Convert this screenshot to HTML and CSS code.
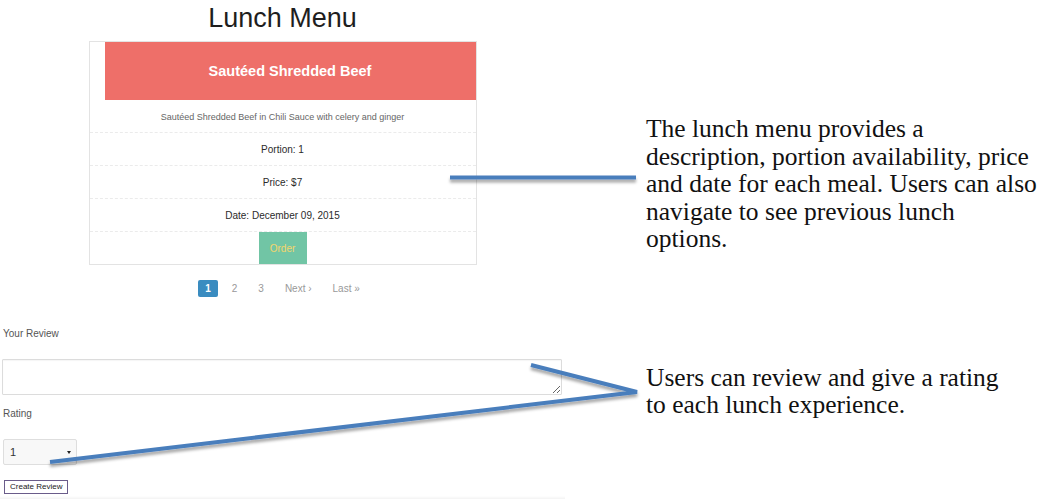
FILE: index.html
```html
<!DOCTYPE html>
<html lang="en">
<head>
<meta charset="utf-8">
<title>Lunch Menu</title>
<link rel="stylesheet" href="styles.css">
</head>
<body>
<div class="page">
  <main class="app">
    <section class="menu">
      <h1 class="title">Lunch Menu</h1>
      <div class="card">
        <div class="card-head">Sautéed Shredded Beef</div>
        <div class="row row-desc">Sautéed Shredded Beef in Chili Sauce with celery and ginger</div>
        <div class="row">Portion: 1</div>
        <div class="row">Price: $7</div>
        <div class="row">Date: December 09, 2015</div>
        <div class="row row-last"><button class="order" type="button">Order</button></div>
      </div>
      <nav class="pager">
        <span class="page-item active">1</span>
        <span class="page-item">2</span>
        <span class="page-item">3</span>
        <span class="page-item">Next ›</span>
        <span class="page-item">Last »</span>
      </nav>
    </section>
    <form class="review">
      <label class="label label-review">Your Review</label>
      <textarea class="review-text"></textarea>
      <label class="label label-rating">Rating</label>
      <div class="select-wrap">
        <select class="rating"><option>1</option><option>2</option><option>3</option><option>4</option><option>5</option></select>
        <span class="caret"></span>
      </div>
      <button class="submit" type="button">Create Review</button>
    </form>
    <div class="bottom-band"></div>
  </main>
  <aside class="notes">
    <p class="note note-menu">The lunch menu provides a<br>description, portion availability, price<br>and date for each meal. Users can also<br>navigate to see previous lunch<br>options.</p>
    <p class="note note-review">Users can review and give a rating<br>to each lunch experience.</p>
  </aside>
  <svg class="callouts" width="1044" height="499" viewBox="0 0 1044 499" aria-hidden="true">
    <defs>
      <filter id="sh" x="-10%" y="-50%" width="120%" height="300%">
        <feDropShadow dx="0" dy="3" stdDeviation="1.6" flood-color="#000" flood-opacity="0.35"/>
      </filter>
    </defs>
    <g stroke="#4a7ebc" stroke-width="4" fill="none" filter="url(#sh)">
      <line x1="450" y1="177.5" x2="636" y2="177.5"/>
      <polyline points="531,365 637,392 50,462" stroke-linejoin="miter"/>
    </g>
  </svg>
</div>
</body>
</html>
```

FILE: styles.css
```css
* { box-sizing: border-box; }
html, body { margin: 0; padding: 0; background: #fff; }
body {
  font-family: "Liberation Sans", Arial, Helvetica, sans-serif;
  color: #333;
  width: 1044px;
  height: 499px;
  overflow: hidden;
}
.page {
  position: relative;
  display: flex;
  width: 1044px;
  height: 499px;
}
.app {
  width: 565px;
  flex: none;
  display: flex;
  flex-direction: column;
}
.menu {
  width: 388px;
  margin: 0 auto;
  display: flex;
  flex-direction: column;
}
.title {
  margin: 0;
  padding-top: 2px;
  font-size: 27px;
  line-height: 32px;
  font-weight: normal;
  text-align: center;
  color: #1e1e1e;
}
.card {
  margin-top: 7px;
  border: 1px solid #e3e3e3;
  display: flex;
  flex-direction: column;
}
.card-head {
  margin-left: 15px;
  height: 58px;
  background: #ee6f69;
  color: #fff;
  font-weight: bold;
  font-size: 14.5px;
  display: flex;
  align-items: center;
  justify-content: center;
}
.row {
  height: 33px;
  padding-top: 1px;
  line-height: 32px;
  border-bottom: 1px dashed #ebebeb;
  text-align: center;
  font-size: 10px;
  color: #2b2b2b;
  overflow: hidden;
}
.row-desc { font-size: 9px; color: #666; }
.row-last { border-bottom: none; height: 32px; padding-top: 0; display: flex; justify-content: center; }
.order {
  width: 48px;
  height: 32px;
  border: none;
  margin: 0;
  padding: 0;
  background: #71c5a5;
  color: #f3d56c;
  font-family: inherit;
  font-size: 10px;
}
.pager {
  margin-top: 15px;
  display: flex;
  justify-content: center;
  gap: 7px;
}
.page-item {
  height: 17px;
  line-height: 17px;
  padding: 0 7px;
  font-size: 10px;
  color: #999;
  border-radius: 2px;
}
.page-item.active {
  background: #3a8cc0;
  color: #fff;
  font-weight: bold;
}
.review {
  display: flex;
  flex-direction: column;
  align-items: flex-start;
  padding-left: 2px;
}
.label {
  font-size: 10px;
  line-height: 12px;
  color: #555;
  padding-left: 1px;
}
.label-review { margin-top: 31px; }
.review-text {
  margin-top: 19px;
  width: 560px;
  height: 36px;
  border: 1px solid #dcdcdc;
  border-radius: 1px;
  padding: 4px;
  resize: vertical;
  font-family: inherit;
  box-shadow: inset 0 1px 1px rgba(0,0,0,0.04);
}
.label-rating { margin-top: 13px; }
.select-wrap {
  position: relative;
  margin-top: 19px;
  margin-left: 1px;
}
.rating {
  appearance: none;
  -webkit-appearance: none;
  width: 74px;
  height: 26px;
  border: 1px solid #dedede;
  border-radius: 2px;
  background: #f8f8f8;
  padding: 0 0 0 6px;
  font-family: inherit;
  font-size: 11px;
  color: #333;
}
.caret {
  position: absolute;
  left: 64px;
  top: 12px;
  width: 0;
  height: 0;
  border-left: 2.5px solid transparent;
  border-right: 2.5px solid transparent;
  border-top: 3px solid #222;
}
.submit {
  margin-top: 15px;
  margin-left: 2px;
  height: 14px;
  padding: 0 5px;
  border: 1px solid #6a5c8a;
  border-radius: 0;
  background: #fff;
  font-family: inherit;
  font-size: 8px;
  line-height: 12px;
  color: #222;
}
.bottom-band {
  margin-top: auto;
  height: 3px;
  background: linear-gradient(#fff, #f3f3f3);
}
.notes {
  flex: 1;
  padding-left: 81px;
  padding-top: 115px;
  display: flex;
  flex-direction: column;
}
.note {
  margin: 0;
  font-family: "Liberation Serif", "Times New Roman", serif;
  font-size: 25.5px;
  line-height: 27.5px;
  color: #111;
  white-space: nowrap;
}
.note-review { margin-top: 111px; }
.callouts {
  position: absolute;
  left: 0;
  top: 0;
  pointer-events: none;
}
```
